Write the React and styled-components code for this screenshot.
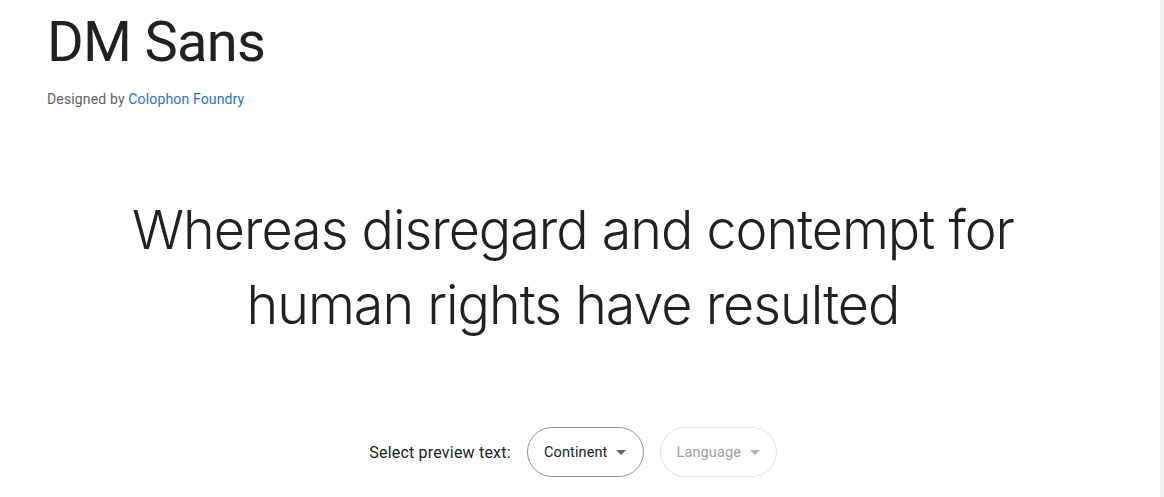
import React from "react";
import styled, { createGlobalStyle } from "styled-components";

const Global = createGlobalStyle`
  html, body { margin: 0; padding: 0; background: #ffffff; }
  body { font-family: Roboto, "Noto Sans", sans-serif; color: #202124; }
`;

const Shell = styled.div`
  display: flex;
  width: 1164px;
  height: 497px;
  overflow: hidden;
`;

const Main = styled.main`
  flex: 1;
  display: flex;
  flex-direction: column;
  padding-right: 14px;
`;

const Track = styled.div`
  width: 4px;
  background: #f1f1f1;
`;

const Header = styled.header`
  padding: 8px 0 0 47px;
`;

const Title = styled.h1`
  margin: 0;
  font-family: Roboto, sans-serif;
  font-weight: 400;
  font-size: 56px;
  line-height: 68px;
  letter-spacing: -0.7px;
  color: #202124;
`;

const Byline = styled.p`
  margin: 13px 0 0;
  font-size: 14px;
  line-height: 20px;
  letter-spacing: 0.15px;
  color: #5f6368;
`;

const Link = styled.a`
  color: #1a73e8;
  text-decoration: none;
`;

const Preview = styled.div`
  margin-top: 83px;
  text-align: center;
  font-family: Inter, sans-serif;
  font-weight: 350;
  font-size: 53.8px;
  line-height: 75px;
  letter-spacing: -1px;
  color: #202124;
`;

const Controls = styled.div`
  margin-top: 85px;
  display: flex;
  align-items: center;
  justify-content: center;
  gap: 16px;
`;

const Label = styled.span`
  font-size: 16px;
  letter-spacing: 0.2px;
  color: #202124;
`;

const Pill = styled.button`
  display: flex;
  align-items: center;
  gap: 9px;
  height: 50px;
  width: 117px;
  box-sizing: border-box;
  justify-content: center;
  padding: 0 16px;
  border-radius: 25px;
  background: #fff;
  border: 1px solid ${(p) => (p.disabled ? "#e3e3e3" : "#8e918f")};
  color: ${(p) => (p.disabled ? "#9aa0a6" : "#202124")};
  font-family: Roboto, sans-serif;
  font-size: 14.5px;
  font-weight: 400;
  letter-spacing: 0.1px;
  cursor: pointer;
`;

const Caret = styled.span`
  width: 0;
  height: 0;
  border-left: 5px solid transparent;
  border-right: 5px solid transparent;
  border-top: 5px solid ${(p) => (p.dim ? "#b0b3b8" : "#5f6368")};
`;

export default function App() {
  return (
    <>
      <Global />
      <Shell>
        <Main>
          <Header>
            <Title>DM Sans</Title>
            <Byline>
              Designed by <Link href="#">Colophon Foundry</Link>
            </Byline>
          </Header>
          <Preview>
            Whereas disregard and contempt for
            <br />
            human rights have resulted
          </Preview>
          <Controls>
            <Label>Select preview text:</Label>
            <Pill>
              Continent <Caret />
            </Pill>
            <Pill disabled>
              Language <Caret dim />
            </Pill>
          </Controls>
        </Main>
        <Track />
      </Shell>
    </>
  );
}
